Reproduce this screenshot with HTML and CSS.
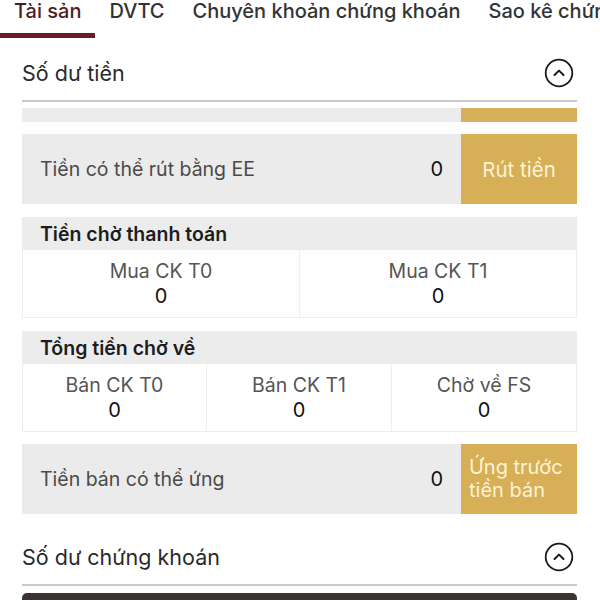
FILE: index.html
```html
<!DOCTYPE html>
<html lang="vi">
<head>
<meta charset="utf-8">
<link rel="stylesheet" href="styles.css">
</head>
<body>
<nav class="tabs">
  <div class="tab active">Tài sản</div>
  <div class="tab">DVTC</div>
  <div class="tab">Chuyên khoản chứng khoán</div>
  <div class="tab">Sao kê chứng khoán</div>
</nav>
<main class="content">
  <div class="sec-head">
    <span class="sec-title">Số dư tiền</span>
    <svg class="chev" width="30" height="30" viewBox="0 0 30 30"><circle cx="15" cy="15" r="13.3" fill="none" stroke="#1a1a1a" stroke-width="1.8"/><path d="M10.5 17 L15 12.6 L19.5 17" fill="none" stroke="#1a1a1a" stroke-width="2" stroke-linecap="round" stroke-linejoin="round"/></svg>
  </div>
  <div class="cut-row"><div class="cut-btn"></div></div>
  <div class="row">
    <span class="row-label">Tiền có thể rút bằng EE</span>
    <span class="row-val">0</span>
    <div class="gold-btn">Rút tiền</div>
  </div>
  <div class="group">
    <div class="group-head">Tiền chờ thanh toán</div>
    <div class="cells two">
      <div class="cell"><span class="c-lab">Mua CK T0</span><span class="c-val">0</span></div>
      <div class="cell"><span class="c-lab">Mua CK T1</span><span class="c-val">0</span></div>
    </div>
  </div>
  <div class="group">
    <div class="group-head">Tổng tiền chờ về</div>
    <div class="cells three">
      <div class="cell"><span class="c-lab">Bán CK T0</span><span class="c-val">0</span></div>
      <div class="cell"><span class="c-lab">Bán CK T1</span><span class="c-val">0</span></div>
      <div class="cell"><span class="c-lab">Chờ về FS</span><span class="c-val">0</span></div>
    </div>
  </div>
  <div class="row">
    <span class="row-label">Tiền bán có thể ứng</span>
    <span class="row-val">0</span>
    <div class="gold-btn two-line">Ứng trước<br>tiền bán</div>
  </div>
  <div class="sec-head sec2">
    <span class="sec-title">Số dư chứng khoán</span>
    <svg class="chev" width="30" height="30" viewBox="0 0 30 30"><circle cx="15" cy="15" r="13.3" fill="none" stroke="#1a1a1a" stroke-width="1.8"/><path d="M10.5 17 L15 12.6 L19.5 17" fill="none" stroke="#1a1a1a" stroke-width="2" stroke-linecap="round" stroke-linejoin="round"/></svg>
  </div>
  <div class="dark-bar"></div>
</main>
</body>
</html>
```
FILE: styles.css
```css
* { box-sizing: border-box; }
html, body { margin: 0; padding: 0; background: #fff; }
body {
  font-family: Inter, Roboto, "Noto Sans", "Liberation Sans", sans-serif;
  color: #222;
  width: 600px;
  height: 600px;
  overflow: hidden;
}
.tabs {
  display: flex;
  height: 38px;
  white-space: nowrap;
  overflow: hidden;
}
.tab {
  flex: none;
  padding: 0 14px;
  font-size: 20px;
  line-height: 23px;
  font-weight: 500;
  color: #333;
  height: 38px;
  border-bottom: 5px solid transparent;
}
.tab.active {
  color: #4e1e24;
  border-bottom-color: #6a1c24;
}
.content {
  padding: 0 23px 0 22px;
  display: flex;
  flex-direction: column;
}
.sec-head {
  display: flex;
  align-items: center;
  justify-content: space-between;
  height: 64px;
  border-bottom: 2px solid #c9c9cc;
  padding-right: 3px;
  padding-top: 8px;
}
.sec-title {
  font-size: 21.5px;
  color: #2a2a2a;
}
.chev { display: block; }
.cut-row {
  margin-top: 6px;
  height: 14px;
  background: #ececec;
  display: flex;
  justify-content: flex-end;
}
.cut-btn {
  width: 116px;
  background: #d7b05a;
}
.row {
  margin-top: 12px;
  height: 70px;
  background: #ebebeb;
  display: flex;
  align-items: center;
}
.row-label {
  flex: 1;
  padding-left: 18px;
  font-size: 19.5px;
  color: #4a4a4a;
}
.row-val {
  font-size: 20px;
  color: #111;
  margin-right: 18px;
}
.gold-btn {
  width: 116px;
  align-self: stretch;
  background: #d6af57;
  color: #fdf3d6;
  font-size: 20.5px;
  display: flex;
  align-items: center;
  justify-content: center;
}
.gold-btn.two-line {
  justify-content: flex-start;
  padding-left: 8px;
  line-height: 23px;
  font-size: 20px;
}
.group {
  margin-top: 13px;
  display: flex;
  flex-direction: column;
}
.group-head {
  height: 33px;
  background: #ececec;
  font-size: 19.5px;
  font-weight: 600;
  color: #1c1c1c;
  padding-left: 18px;
  display: flex;
  align-items: center;
}
.cells {
  display: grid;
  height: 68px;
  border: 1px solid #eeeeee;
  border-top: none;
}
.cells.two { grid-template-columns: 277px 1fr; }
.cells.three { grid-template-columns: 184px 185px 1fr; }
.cell {
  display: flex;
  flex-direction: column;
  align-items: center;
  justify-content: center;
  border-right: 1px solid #eeeeee;
}
.cell:last-child { border-right: none; }
.c-lab {
  font-size: 19.5px;
  color: #555;
  line-height: 25px;
}
.c-val {
  font-size: 20px;
  color: #111;
  line-height: 25px;
}
.sec2 {
  height: 72px;
  padding-top: 16px;
}
.dark-bar {
  margin-top: 7px;
  height: 30px;
  background: #3b3434;
  border-radius: 5px 5px 0 0;
}
```
